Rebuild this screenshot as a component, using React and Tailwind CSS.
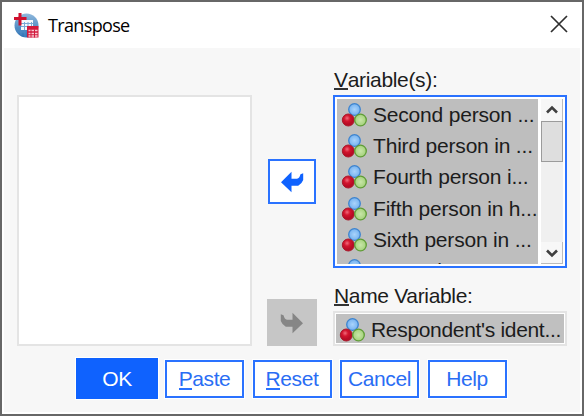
import React from 'react';
import { clsx } from 'clsx';

const variables = [
    'Second person ...',
    'Third person in ...',
    'Fourth person i...',
    'Fifth person in h...',
    'Sixth person in ...',
    'Seventh person ...',
];

const actions = [
    { hotkey: 'P', rest: 'aste' },
    { hotkey: 'R', rest: 'eset' },
    { hotkey: '', rest: 'Cancel' },
    { hotkey: '', rest: 'Help' },
];

const AppIcon = () => (
    <svg width="27" height="27" viewBox="0 0 27 27" className="shrink-0">
        <defs>
            <linearGradient id="globe" x1="0" y1="0" x2="0" y2="1">
                <stop offset="0" stopColor="#8fb8dc" />
                <stop offset="1" stopColor="#2d72b5" />
            </linearGradient>
        </defs>
        <circle cx="13.5" cy="13.5" r="12" fill="url(#globe)" />
        <path d="M3 16h9M4 20h9M8 14v9M12 12v13" stroke="#4c8ac4" strokeWidth="1" />
        <path d="M8 8h12v10H8z" fill="#f4f8fc" />
        <path d="M8 11.5h12M8 14.5h12M11.5 10v8M15 10v8M18.5 10v8" stroke="#78a8d4" strokeWidth="1" />
        <path d="M7 1v12.500M1 6.500h12.500" stroke="#d00f2d" strokeWidth="3" />
        <path d="M14 14h11.500v11.500H14z" fill="#d2193c" />
        <path d="M15.500 18.500h9M15.500 21.500h9M15.500 24h9" stroke="#f7c9d2" strokeWidth="1.500" />
        <path d="M18 17.500v8M21.500 17.500v8" stroke="#d2193c" strokeWidth="1" />
    </svg>
);

const NominalIcon = ({ className }) => (
    <svg width="27" height="26" viewBox="0 0 27 26" className={clsx('shrink-0', className)}>
        <defs>
            <radialGradient id="blueBall">
                <stop offset="0" stopColor="#a9d3fb" />
                <stop offset="1" stopColor="#75b2f0" />
            </radialGradient>
            <radialGradient id="redBall" cx="0.4" cy="0.35">
                <stop offset="0" stopColor="#ef6b7b" />
                <stop offset="0.5" stopColor="#d3152e" />
                <stop offset="1" stopColor="#b70c25" />
            </radialGradient>
            <radialGradient id="greenBall">
                <stop offset="0" stopColor="#c8e6a8" />
                <stop offset="1" stopColor="#a4d17b" />
            </radialGradient>
        </defs>
        <circle cx="13.500" cy="7.500" r="5.800" fill="url(#blueBall)" stroke="#3d84cf" strokeWidth="1.300" />
        <circle cx="7.300" cy="18" r="6" fill="url(#redBall)" stroke="#a91a2c" strokeWidth="1" />
        <circle cx="19.500" cy="18" r="5.800" fill="url(#greenBall)" stroke="#5f9d35" strokeWidth="1.300" />
    </svg>
);

const MoveArrow = ({ className }) => (
    <svg width="24" height="22" viewBox="0 0 24 22" className={className}>
        <path d="M1 11.200L11.500.700v7H17q2.500-.5 3.500-4.500l2.700-1V9q-1.500 4-5 5.700h-6.700v6.600z" fill="currentColor" />
    </svg>
);

const Chevron = ({ className }) => (
    <svg width="14" height="10" viewBox="0 0 14 10" className={className}>
        <path d="M2 7.500L7 2.500l5 5" fill="none" stroke="#404040" strokeWidth="2.600" />
    </svg>
);

const Label = ({ hotkey, rest }) => (
    <div className="h-[24px] pl-px text-[21px] leading-[24px] tracking-[-0.330px] whitespace-nowrap">
        <span className="inline-block h-[22px] border-b-2 border-[#333] leading-[24px]">{hotkey}</span>
        {rest}
    </div>
);

const ScrollBar = () => (
    <div className="flex h-full w-[25px] shrink-0 flex-col border-l-3 border-white bg-[#f0f0f0]">
        <div className="flex h-[22px] items-center justify-center border-r border-[#bbb] bg-[#f7f7f7]">
            <Chevron />
        </div>
        <div className="h-[41px] border border-[#9b9b9b] bg-[#dedede]" />
        <div className="flex-1" />
        <div className="flex h-[22px] items-center justify-center border-r border-b border-[#bbb] bg-[#f7f7f7]">
            <Chevron className="rotate-180" />
        </div>
    </div>
);

const App = () => (
    <div className="flex h-[416px] w-[584px] overflow-hidden bg-[#676767] p-[2px] font-['Liberation_Sans',sans-serif] text-[#1c1c1c]">
        <div className="flex flex-1 flex-col border-2 border-t-0 border-white bg-[#f7f7f7]">
            <header className="flex h-[46px] shrink-0 items-center bg-white pr-[12px] pl-[9px]">
                <AppIcon />
                <h1 className="ml-[8px] flex-1 font-['Open_Sans',sans-serif] text-[18px] leading-[24px] tracking-[-0.65px] text-black">
                    Transpose
                </h1>
                <svg width="18" height="18" viewBox="0 0 18 18" className="-mt-[2px]">
                    <path d="M1 1l16 16M17 1L1 17" stroke="#2e2e2e" strokeWidth="1.700" />
                </svg>
            </header>

            <main className="flex h-[298px] shrink-0 pl-[13px]">
                <div className="mt-[47px] h-[251px] w-[235px] border-2 border-[#e4e4e4] bg-white" />

                <div className="flex w-[80px] flex-col items-center pt-[111px]">
                    <button className="flex h-[45px] w-[48px] items-center justify-center border-2 border-[#2a72ff] bg-white text-[#0f62fe]">
                        <MoveArrow />
                    </button>
                    <button className="mt-[95px] flex h-[47px] w-[50px] items-center justify-center bg-[#c6c6c6] text-[#868686]">
                        <MoveArrow className="-scale-x-100" />
                    </button>
                </div>

                <div className="ml-px w-[234px] pt-[20px]">
                    <Label hotkey="V" rest="ariable(s):" />
                    <div className="mt-[3px] flex h-[173px] border-2 border-[#2a72ff] bg-white p-[2px]">
                        <ul className="min-w-0 flex-1 overflow-hidden bg-[#bebebe]">
                            {variables.map((label) => (
                                <li key={label} className="flex h-[31.200px] items-start pl-[4px]">
                                    <NominalIcon className="mt-[3px]" />
                                    <span className="mt-[4px] ml-[5px] text-[21px] leading-[24px] tracking-[-0.190px] whitespace-nowrap">
                                        {label}
                                    </span>
                                </li>
                            ))}
                        </ul>
                        <ScrollBar />
                    </div>
                    <div className="mt-[16px]">
                        <Label hotkey="N" rest="ame Variable:" />
                    </div>
                    <div className="mt-[3px] h-[35px] border-2 border-[#e4e4e4] bg-white p-px">
                        <div className="flex h-full items-start overflow-hidden bg-[#c0c0c0] pl-[3px]">
                            <NominalIcon className="mt-[3px]" />
                            <span className="mt-[4px] ml-[5px] text-[21px] leading-[24px] tracking-[-0.320px] whitespace-nowrap">
                                Respondent's ident...
                            </span>
                        </div>
                    </div>
                </div>
            </main>

            <footer className="flex items-center pt-[12px] pl-[72px] text-[21px] leading-[24px] tracking-[-0.400px]">
                <button className="h-[41px] w-[82px] bg-[#0f62fe] text-white outline-1 outline-white">OK</button>
                <div className="ml-[7px] flex gap-[8.500px]">
                    {actions.map((item) => (
                        <button
                            key={item.rest}
                            className="h-[38px] w-[79px] border-2 border-[#2a72ff] bg-white text-[#2a6df4] outline-1 outline-white"
                        >
                            {item.hotkey && (
                                <span className="inline-block h-[23px] border-b-2 border-[#2a72ff]">{item.hotkey}</span>
                            )}
                            {item.rest}
                        </button>
                    ))}
                </div>
            </footer>
        </div>
    </div>
);

export default App;
